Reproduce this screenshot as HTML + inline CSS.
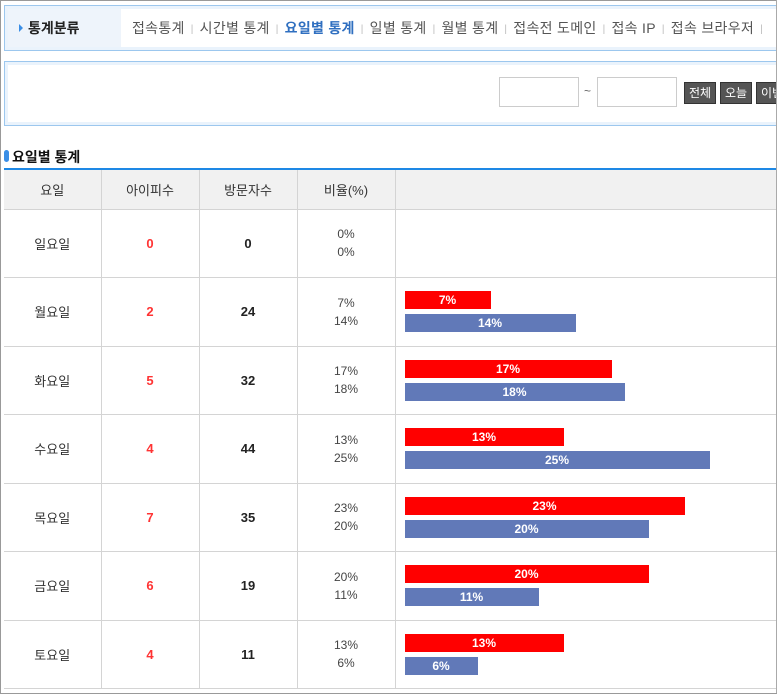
<!DOCTYPE html>
<html><head><meta charset="utf-8"><style>
*{margin:0;padding:0;box-sizing:border-box}
body{width:780px;height:694px;background:#fff;font-family:"Liberation Sans","Noto Sans CJK KR",sans-serif;position:relative;overflow:hidden;color:#333}
.frame{position:absolute;left:0;top:0;width:777px;height:694px;border:1px solid #999;border-right:1px solid #aaa}
.abs{position:absolute}
.nav{left:4px;top:5px;width:790px;height:46px;border:1px solid #9cc7ee;background:#eaf3fc}
.navin{position:absolute;left:3px;top:3px;right:3px;bottom:3px;background:#fff}
.navl{position:absolute;left:0;top:0;width:113px;height:100%;background:#eef4fb;font-size:14px;font-weight:bold;color:#222;line-height:38px;padding-left:20px}
.navl:before{content:"";position:absolute;left:11px;top:15px;border-left:4px solid #3a8ee6;border-top:4px solid transparent;border-bottom:4px solid transparent}
.menu{position:absolute;left:124px;top:0;line-height:38px;font-size:14px;color:#555;white-space:nowrap;letter-spacing:0.3px}
.menu .s{color:#bbb;font-size:10px;margin:0 6px;position:relative;top:-1px}
.menu .on{color:#2f6fc0;font-weight:bold}
.sb{left:4px;top:61px;width:790px;height:65px;border:1px solid #9cc7ee;background:#eaf3fc}
.sbin{position:absolute;left:3px;top:3px;right:3px;bottom:3px;background:#fff}
.inp{position:absolute;top:77px;height:30px;border:1px solid #ccc;background:#fff}
.btn{position:absolute;top:82px;height:22px;background:#555;border:1px solid #333;color:#fff;font-size:12px;line-height:20px;text-align:center}
.title{left:12px;top:147px;font-size:14px;font-weight:bold;color:#111}
.pill{left:4px;top:150px;width:5px;height:12px;border-radius:3px;background:#3a8ee6}
table{position:absolute;left:4px;top:168px;width:790px;border-collapse:collapse;border-top:2px solid #1e88e5}
td,th{border:1px solid #d4d4d4;text-align:center;font-size:13px}
th{background:#f1f1f1;height:40px;font-weight:normal;color:#333}
td{height:68.5px;color:#333}
tr td:first-child,tr th:first-child{border-left:none}
.r{color:#f33;font-weight:bold}
.b{font-weight:bold;color:#222}
.p{font-size:12px;line-height:18px;color:#444}
.g{text-align:left;padding-left:9px}
.bar{height:18px;color:#fff;font-size:12px;font-weight:bold;line-height:18px;text-align:center}
.red{background:#f00;margin-bottom:5px}
.blu{background:#6179b8}
</style></head><body>
<div class="frame"></div>
<div class="abs nav"><div class="navin"><div class="navl">통계분류</div>
<div class="menu">접속통계<span class="s">|</span>시간별 통계<span class="s">|</span><span class="on">요일별 통계</span><span class="s">|</span>일별 통계<span class="s">|</span>월별 통계<span class="s">|</span>접속전 도메인<span class="s">|</span>접속 IP<span class="s">|</span>접속 브라우저<span class="s">|</span></div></div></div>
<div class="abs sb"><div class="sbin"></div></div>
<div class="inp" style="left:499px;width:80px"></div>
<div class="abs" style="left:584px;top:84px;font-size:12px;color:#666">~</div>
<div class="inp" style="left:597px;width:80px"></div>
<div class="btn" style="left:684px;width:32px">전체</div>
<div class="btn" style="left:720px;width:32px">오늘</div>
<div class="btn" style="left:756px;width:32px">이번</div>
<div class="abs pill"></div>
<div class="abs title">요일별 통계</div>
<table>
<colgroup><col style="width:97px"><col style="width:98px"><col style="width:98px"><col style="width:98px"><col></colgroup>
<tr><th>요일</th><th>아이피수</th><th>방문자수</th><th>비율(%)</th><th></th></tr>
<tr><td>일요일</td><td class="r">0</td><td class="b">0</td><td class="p">0%<br>0%</td><td class="g"></td></tr>
<tr><td>월요일</td><td class="r">2</td><td class="b">24</td><td class="p">7%<br>14%</td><td class="g"><div class="bar red" style="width:86px">7%</div><div class="bar blu" style="width:171px">14%</div></td></tr>
<tr><td>화요일</td><td class="r">5</td><td class="b">32</td><td class="p">17%<br>18%</td><td class="g"><div class="bar red" style="width:207px">17%</div><div class="bar blu" style="width:220px">18%</div></td></tr>
<tr><td>수요일</td><td class="r">4</td><td class="b">44</td><td class="p">13%<br>25%</td><td class="g"><div class="bar red" style="width:159px">13%</div><div class="bar blu" style="width:305px">25%</div></td></tr>
<tr><td>목요일</td><td class="r">7</td><td class="b">35</td><td class="p">23%<br>20%</td><td class="g"><div class="bar red" style="width:280px">23%</div><div class="bar blu" style="width:244px">20%</div></td></tr>
<tr><td>금요일</td><td class="r">6</td><td class="b">19</td><td class="p">20%<br>11%</td><td class="g"><div class="bar red" style="width:244px">20%</div><div class="bar blu" style="width:134px">11%</div></td></tr>
<tr><td>토요일</td><td class="r">4</td><td class="b">11</td><td class="p">13%<br>6%</td><td class="g"><div class="bar red" style="width:159px">13%</div><div class="bar blu" style="width:73px">6%</div></td></tr>
</table>
<div class="abs" style="left:777px;top:0;width:10px;height:694px;background:#fff"></div>
<div class="abs" style="left:776px;top:0;width:1px;height:694px;background:#aaa"></div>
<div class="abs" style="left:0;top:693px;width:777px;height:1px;background:#999"></div>
</body></html>
